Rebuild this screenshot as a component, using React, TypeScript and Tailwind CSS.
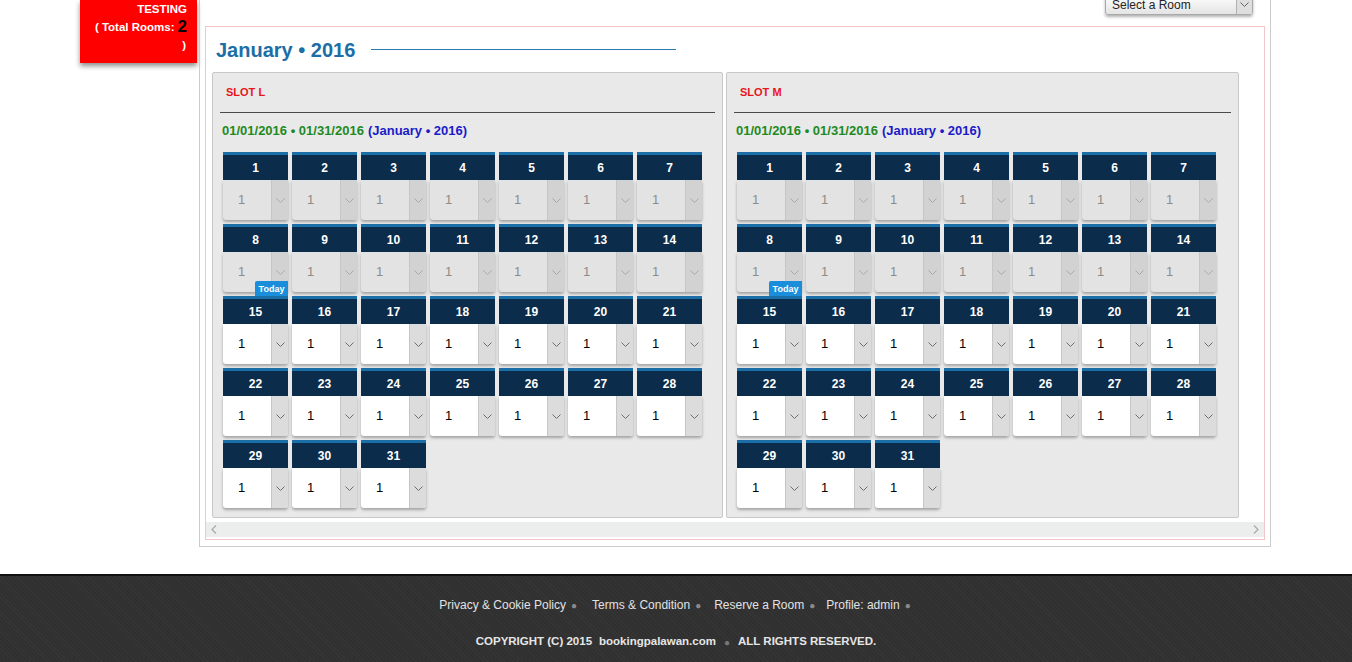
import React from "react";

const FONT = { fontFamily: '"Liberation Sans", Arial, sans-serif' };

const Chevron = ({ color = "#7a7a7a" }: { color?: string }) => (
  <svg width="9" height="5" viewBox="0 0 9 5">
    <polyline points="0.5,0.5 4.5,4.5 8.5,0.5" fill="none" stroke={color} strokeWidth="1" />
  </svg>
);

function DayCell({ day, disabled, today }: { day: number; disabled: boolean; today: boolean }) {
  return (
    <div className="relative flex flex-col w-[65px] h-[68px]">
      <div className="h-[28px] bg-[#0b2c4b] border-t-[3px] border-[#1c6fa6] flex items-center justify-center text-white text-[12px] font-bold">
        {day}
      </div>
      <div
        className={`h-[40px] flex rounded-b-[3px] overflow-hidden shadow-[0_2px_3px_rgba(0,0,0,0.3)] ${
          disabled ? "bg-[#e3e3e3]" : "bg-white"
        }`}
      >
        <div
          className={`flex-1 flex items-center pl-[15px] text-[13px] ${
            disabled ? "text-[#8c8c8c]" : "text-black"
          }`}
        >
          1
        </div>
        <div
          className={`w-[17px] flex items-center justify-center border-l border-[#c6c6c6] ${
            disabled ? "bg-[#d2d2d2]" : "bg-[#dcdcdc]"
          }`}
        >
          <Chevron color={disabled ? "#a8a8a8" : "#6e6e6e"} />
        </div>
      </div>
      {today && (
        <div className="absolute right-0 bottom-[-6px] w-[33px] h-[17px] bg-[#1a8edb] text-white text-[9px] font-bold flex items-center justify-center rounded-tl-[2px]">
          Today
        </div>
      )}
    </div>
  );
}

function SlotPanel({ name, wide }: { name: string; wide: boolean }) {
  const days = Array.from({ length: 31 }, (_, i) => i + 1);
  return (
    <div
      className={`${wide ? "w-[513px]" : "w-[511px]"} h-[446px] border border-[#c8c8c8] rounded-[2px] bg-[#e9e9e9] flex flex-col`}
    >
      <div className="h-[39px] flex items-center pl-[13px] text-[11px] font-bold text-[#e8151b]">{name}</div>
      <div className="mx-[7px] h-px bg-[#4a4a4a]" />
      <div className="h-[35px] flex items-center pl-[9px] text-[13px] font-bold">
        <span className="text-[#1f8a1f]">01/01/2016 • 01/31/2016</span>
        <span className="text-[#1b1bc8] ml-[4px]">(January • 2016)</span>
      </div>
      <div className="mt-[4px] pl-[10px] grid grid-cols-[repeat(7,65px)] gap-[4px]">
        {days.map((d) => (
          <DayCell key={d} day={d} disabled={d <= 14} today={d === 8} />
        ))}
      </div>
    </div>
  );
}

export default function App() {
  return (
    <div style={FONT} className="w-[1352px] h-[662px] bg-white flex flex-col overflow-hidden">
      <div className="flex items-start">
        <div className="ml-[80px] w-[117px] h-[63px] bg-[#ff0000] shadow-[0_3px_5px_rgba(0,0,0,0.45)] flex flex-col items-end pr-[10px] text-white text-[11.5px] font-bold leading-[18px]">
          <div>TESTING</div>
          <div className="flex items-center">
            <span>( Total Rooms:</span>
            <span className="ml-[3px] text-black text-[17px]">2</span>
          </div>
          <div className="pr-[1px]">)</div>
        </div>
        <div className="ml-[2px] w-[1072px] h-[547px] border border-t-0 border-[#cccccc] flex flex-col">
          <div className="h-[26px] flex justify-end items-start pr-[17px]">
            <div className="-mt-[6px] w-[148px] h-[21px] flex border border-[#a9a9a9] rounded-[3px] bg-gradient-to-b from-white to-[#e4e4e4] shadow-[0_2px_3px_rgba(0,0,0,0.3)] overflow-hidden">
              <div className="flex-1 flex items-center pl-[6px] text-[12px] text-[#222]">Select a Room</div>
              <div className="w-[16px] flex items-center justify-center border-l border-[#b0b0b0] bg-[#dedede]">
                <Chevron color="#666" />
              </div>
            </div>
          </div>
          <div className="mx-[5px] border border-[#f2c6c6] flex flex-col">
            <div className="h-[45px] flex items-center pl-[10px]">
              <span className="text-[20px] font-bold text-[#1c6ea6]">January • 2016</span>
              <div className="ml-[16px] w-[305px] h-px bg-[#2a78b0]" />
            </div>
            <div className="flex pl-[6px] gap-[3px]">
              <SlotPanel name="SLOT L" wide={false} />
              <SlotPanel name="SLOT M" wide={true} />
            </div>
            <div className="mt-[4px] h-[15px] bg-[#eceeed] flex items-center justify-between px-[5px]">
              <svg width="6" height="9" viewBox="0 0 6 9">
                <polyline points="5,0.5 1,4.5 5,8.5" fill="none" stroke="#a8a8a8" strokeWidth="1.2" />
              </svg>
              <svg width="6" height="9" viewBox="0 0 6 9">
                <polyline points="1,0.5 5,4.5 1,8.5" fill="none" stroke="#a8a8a8" strokeWidth="1.2" />
              </svg>
            </div>
            <div className="h-[2px]" />
          </div>
        </div>
      </div>
      <div className="mt-[27px] h-[88px] border-t-2 border-[#111] bg-[#333333] bg-[repeating-linear-gradient(45deg,#353535_0px,#353535_1px,#303030_1px,#303030_3px)] flex flex-col items-center">
        <div className="mt-[20px] h-[18px] flex items-center text-[12px] text-[#e2e2e2] pr-[2px]">
          <span>Privacy &amp; Cookie Policy</span>
          <span className="ml-[5px] mr-[15px] text-[#8a8a8a] text-[10px]">●</span>
          <span>Terms &amp; Condition</span>
          <span className="ml-[5px] mr-[13px] text-[#8a8a8a] text-[10px]">●</span>
          <span>Reserve a Room</span>
          <span className="ml-[5px] mr-[11px] text-[#8a8a8a] text-[10px]">●</span>
          <span>Profile: admin</span>
          <span className="ml-[5px] text-[#8a8a8a] text-[10px]">●</span>
        </div>
        <div className="mt-[19px] h-[18px] flex items-center text-[11.5px] font-bold text-[#e6e6e6]">
          <span>COPYRIGHT (C) 2015</span>
          <span className="ml-[7px]">bookingpalawan.com</span>
          <span className="mx-[8px] text-[#777] text-[10px]">●</span>
          <span>ALL RIGHTS RESERVED.</span>
        </div>
      </div>
    </div>
  );
}
